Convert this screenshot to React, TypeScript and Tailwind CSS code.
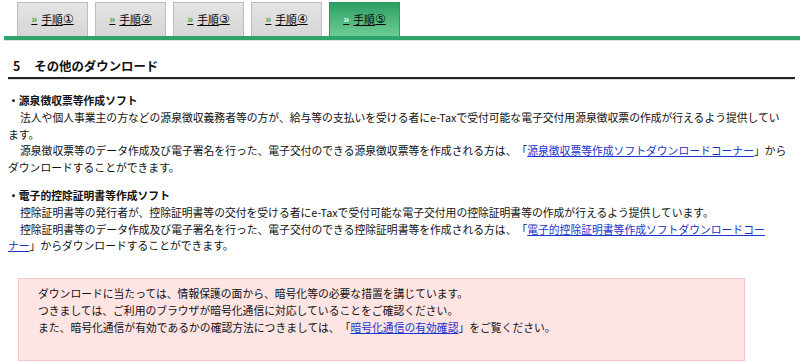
const tabs = ["①", "②", "③", "④", "⑤"];

const TabBar = () => {
  return (
    <div>
      <div className="flex gap-[7px] pl-[17px] pt-[2px]">
        {tabs.map((n, i) => {
          const active = i === tabs.length - 1;
          return (
            <a
              key={n}
              href="#"
              className={
                active
                  ? "flex h-[34px] w-[71px] items-center justify-center border border-b-0 border-[#2a9a60] bg-gradient-to-b from-[#2c9e62] to-[#6ccd95] pb-[1px] text-black underline"
                  : "flex h-[34px] w-[71px] items-center justify-center border border-b-0 border-[#bcbcbc] bg-gradient-to-b from-[#e4e4e4] to-[#d6d6d6] pb-[1px] text-black underline"
              }
            >
              <span
                className={active ? "font-bold text-[#d9f5e4]" : "font-bold text-[#4cae5a]"}
                style={{ fontFamily: '"Liberation Sans", sans-serif' }}
              >
                »
              </span>
              <span className="ml-[4px]">手順</span>
              <span className="text-[12px]" style={{ fontFamily: '"DejaVu Sans", "Noto Sans CJK JP", sans-serif' }}>
                {n}
              </span>
            </a>
          );
        })}
      </div>
      <div className="ml-[4px] h-[4px] bg-[#2ea46a]" />
      <div className="ml-[4px] h-px bg-[#dedede]" />
    </div>
  );
};

const Link = ({ children }: { children: React.ReactNode }) => (
  <a href="#" className="text-[#1a33cc] underline">
    {children}
  </a>
);

const App = () => {
  return (
    <div
      className="h-[362px] w-[800px] overflow-hidden bg-white text-[10.8px] text-[#111] [text-spacing-trim:space-all]"
      style={{ fontFamily: '"Noto Sans CJK JP", "Noto Sans", sans-serif' }}
    >
      <TabBar />

      <div className="ml-[8px] mr-[5px] mt-[16px] border-b-2 border-[#222] px-[5px] pb-[2px] text-[12.4px] font-bold leading-[18px] shadow-[0_1px_0_#dddddd]">
        5<span className="ml-[14px]">その他のダウンロード</span>
      </div>

      <div className="pl-[8px] pr-[6px]">
        <div className="mt-[12px]">
          <p className="font-bold leading-[18px]">・源泉徴収票等作成ソフト</p>
          <p className="indent-[12px] leading-[16.5px]">
            法人や個人事業主の方などの源泉徴収義務者等の方が、給与等の支払いを受ける者にe-Taxで受付可能な電子交付用源泉徴収票の作成が行えるよう提供してい
            <br />
            ます。
          </p>
          <p className="indent-[12px] leading-[16.5px]">
            源泉徴収票等のデータ作成及び電子署名を行った、電子交付のできる源泉徴収票等を作成される方は、「
            <Link>源泉徴収票等作成ソフトダウンロードコーナー</Link>」から
            <br />
            ダウンロードすることができます。
          </p>
        </div>

        <div className="mt-[11px]">
          <p className="font-bold leading-[18px]">・電子的控除証明書等作成ソフト</p>
          <p className="indent-[12px] leading-[16.5px]">
            控除証明書等の発行者が、控除証明書等の交付を受ける者にe-Taxで受付可能な電子交付用の控除証明書等の作成が行えるよう提供しています。
          </p>
          <p className="indent-[12px] leading-[16.5px]">
            控除証明書等のデータ作成及び電子署名を行った、電子交付のできる控除証明書等を作成される方は、「
            <Link>
              電子的控除証明書等作成ソフトダウンロードコー
              <br />
              ナー
            </Link>
            」からダウンロードすることができます。
          </p>
        </div>
      </div>

      <div className="ml-[18px] mt-[24px] w-[727px] border border-[#f5c6c6] bg-[#ffe4e4] pb-[24px] pl-[19px] pt-[6px] leading-[17px]">
        <p>ダウンロードに当たっては、情報保護の面から、暗号化等の必要な措置を講じています。</p>
        <p>つきましては、ご利用のブラウザが暗号化通信に対応していることをご確認ください。</p>
        <p>
          また、暗号化通信が有効であるかの確認方法につきましては、「<Link>暗号化通信の有効確認</Link>」をご覧ください。
        </p>
      </div>
    </div>
  );
};

export default App;
